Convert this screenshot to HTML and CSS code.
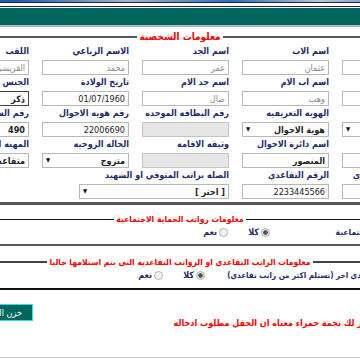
FILE: index.html
```html
<!DOCTYPE html>
<html lang="ar" dir="rtl">
<head>
    <meta charset="UTF-8">
    <meta name="viewport" content="width=device-width, initial-scale=1.0">
    <title>استمارة المتقاعد</title>
    <link rel="stylesheet" href="styles.css">
</head>
<body>

<div class="page">
    <div class="banner"></div>
    <div class="topbar"><div class="strip"></div></div>

    <fieldset class="box box-main">
        <legend>معلومات الشخصية</legend>
        <div class="grid">
            <div class="field"><label>الاسم</label><input type="text" class="ro" value="سعد" readonly></div>
            <div class="field"><label>اسم الاب</label><input type="text" class="ro" value="عثمان" readonly></div>
            <div class="field"><label>اسم الجد</label><input type="text" class="ro" value="عمر" readonly></div>
            <div class="field"><label>الاسم الرباعي</label><input type="text" class="ro" value="محمد" readonly></div>
            <div class="field"><label>اللقب</label><input type="text" class="ro" value="القريشي" readonly></div>

            <div class="field"><label>اسم الام</label><input type="text" class="ro" value="" readonly></div>
            <div class="field"><label>اسم اب الام</label><input type="text" class="ro" value="وهب" readonly></div>
            <div class="field"><label>اسم جد الام</label><input type="text" class="ro" value="صال" readonly></div>
            <div class="field"><label>تاريخ الولادة</label><input type="text" value="01/07/1960"></div>
            <div class="field"><label>الجنس</label><input type="text" class="strong dark" value="ذكر"></div>

            <div class="field"><label>نوع الوثيقه</label>
                <div class="select"><select><option>هوية الاحوال</option></select></div>
            </div>
            <div class="field"><label>الهويه التعريفيه</label>
                <div class="select"><select><option>هوية الاحوال</option></select></div>
            </div>
            <div class="field"><label>رقم البطاقه الموحده</label><input type="text" disabled></div>
            <div class="field"><label>رقم هويه الاحوال</label><input type="text" value="22006690"></div>
            <div class="field"><label>رقم السجل</label><input type="text" class="strong" value="490"></div>

            <div class="field"><label>رقم الصحيفه</label><input type="text" value=""></div>
            <div class="field"><label>اسم دائرة الاحوال</label><input type="text" class="strong" value="المنصور"></div>
            <div class="field"><label>وثيقه الاقامه</label><input type="text" disabled></div>
            <div class="field"><label>الحاله الزوجيه</label>
                <div class="select"><select><option>متزوج</option></select></div>
            </div>
            <div class="field"><label>المهنه الحاليه</label><input type="text" class="strong" value="متقاعد"></div>

            <div class="field"><label>رقم الهاتف الخلوي</label><input type="text" value=""></div>
            <div class="field"><label>الرقم التقاعدي</label><input type="text" value="2233445566"></div>
            <div class="field span-2"><label>الصله براتب المتوفي او الشهيد</label>
                <div class="select select-wide"><select><option>[ اختر ]</option></select></div>
            </div>
        </div>
    </fieldset>

    <fieldset class="box box-social">
        <legend>معلومات رواتب الحماية الاجتماعية</legend>
        <div class="choice">
            <span class="question">هل تستلم اعانه اجتماعية</span>
            <label class="opt"><input type="radio" name="social" checked>كلا</label>
            <label class="opt"><input type="radio" name="social">نعم</label>
        </div>
    </fieldset>

    <fieldset class="box box-pension">
        <legend>معلومات الراتب التقاعدي او الرواتب التقاعديه التي يتم استلامها حاليا</legend>
        <div class="choice">
            <span class="question question-long">هل لديك راتب تقاعدي اخر (تستلم اكثر من راتب تقاعدي)</span>
            <label class="opt"><input type="radio" name="pension" checked>كلا</label>
            <label class="opt"><input type="radio" name="pension">نعم</label>
        </div>
    </fieldset>

    <div class="actions">
        <p class="note">ملاحظة : عند ظهور لك نجمة حمراء معناه ان الحقل مطلوب ادخاله</p>
        <button type="button">خزن البيانات</button>
    </div>

    <div class="footer-line"></div>
</div>

</body>
</html>
```

FILE: styles.css
```css
body {
    margin: 0;
    overflow: hidden;
    background: #fff;
    font-family: Tahoma, "DejaVu Sans Condensed", "DejaVu Sans", sans-serif;
    font-stretch: condensed;
    font-size: 9px;
}
.page {
    width: 640px;
    margin-right: -140px;
    direction: rtl;
}
.banner {
    height: 2px;
    background: linear-gradient(to left, #c8322a 0, #e3b23c 3%, #5b3f86 6%, #2a64b0 10%, #b9c6d6 28%, #2d6db7 42%, #a5b5c9 58%, #1f5ba8 76%, #3d79c2 100%);
    border-bottom: 1px solid #1d2352;
}
.topbar {
    margin-top: 3px;
    border-top: 1px solid #1d2352;
    padding-top: 1px;
}
.strip {
    height: 17px;
    background: #00675f;
    border-bottom: 2px solid #a9b9b6;
}

/* fieldsets */
.box {
    margin: 3px 0 0;
    padding: 0 0 3px;
    border: none;
    border-top: 2px solid #555;
    border-bottom: 3px solid #555;
    min-width: 0;
}
.box legend {
    margin: 0 auto;
    padding: 0 2px;
    color: #f00;
    font-size: 10px;
    font-weight: bold;
    line-height: 14px;
}
.box-social legend,
.box-pension legend {
    font-size: 8.5px;
}
.box-social {
    margin-top: 7px;
    border-top: 1px solid #111;
    border-bottom: 2px solid #555;
    padding-bottom: 6px;
}
.box-pension {
    margin-top: 9px;
    border-top: 2px solid #444;
    border-bottom: 2px solid #111;
    padding-bottom: 7px;
}

.grid {
    display: grid;
    grid-template-columns: repeat(5, 87px);
    column-gap: 13px;
    margin-right: 71px;
}
.field {
    display: flex;
    flex-direction: column;
    min-width: 0;
}
.field label,
.question,
.opt {
    color: #1f2a6b;
    font-weight: bold;
    white-space: nowrap;
}
.field label {
    height: 14px;
    line-height: 14px;
    margin-bottom: 2px;
}
.span-2 {
    grid-column: span 2;
}

input[type="text"],
select {
    width: 100%;
    height: 15px;
    box-sizing: border-box;
    border: 1px solid #b8b8b8;
    padding: 0 3px;
    font-family: inherit;
    font-size: 9px;
    color: #222;
    background: #fff;
    outline: none;
}
input.ro {
    color: #8a8a8a;
}
input.strong {
    font-weight: bold;
}
input.dark {
    border-color: #444;
}
input:disabled {
    background: #e6e6e6;
    border-color: #c4c4c4;
}

.select {
    position: relative;
}
.select select {
    appearance: none;
    -webkit-appearance: none;
    padding-left: 14px;
    font-weight: bold;
}
.select::after {
    content: "▼";
    position: absolute;
    left: 4px;
    top: 3px;
    font-size: 6px;
    color: #111;
}
.select-wide {
    width: 150px;
}

/* radios */
.choice {
    display: flex;
    align-items: center;
    height: 12px;
    margin-right: 71px;
}
.question {
    width: 159px;
    font-size: 8.5px;
}
.question-long {
    width: 224px;
    font-size: 8px;
}
.opt {
    display: flex;
    align-items: center;
    gap: 2px;
    margin-left: 20px;
}
.opt input {
    appearance: none;
    -webkit-appearance: none;
    width: 9px;
    height: 9px;
    margin: 0;
    border: 1px solid #b0b0b0;
    border-radius: 50%;
    background: #f2f2f2;
}
.opt input:checked {
    background: radial-gradient(circle, #555 0 2px, #e8e8e8 2.5px);
}

/* bottom */
.actions {
    display: flex;
    justify-content: space-between;
    align-items: flex-start;
    margin-top: 14px;
}
.note {
    margin: 0 65px 0 0;
    padding-top: 12px;
    line-height: 14px;
    color: #f00;
    font-size: 9px;
    font-weight: bold;
    white-space: nowrap;
}
.actions button {
    width: 100px;
    height: 17px;
    margin-left: 73px;
    padding: 0 10px 0 0;
    text-align: right;
    background: #00675f;
    color: #fff;
    border: 1px solid #22e5e5;
    font-family: inherit;
    font-size: 9px;
}
.footer-line {
    margin-top: 27px;
    border-top: 1px solid #c8c8c8;
}
```
